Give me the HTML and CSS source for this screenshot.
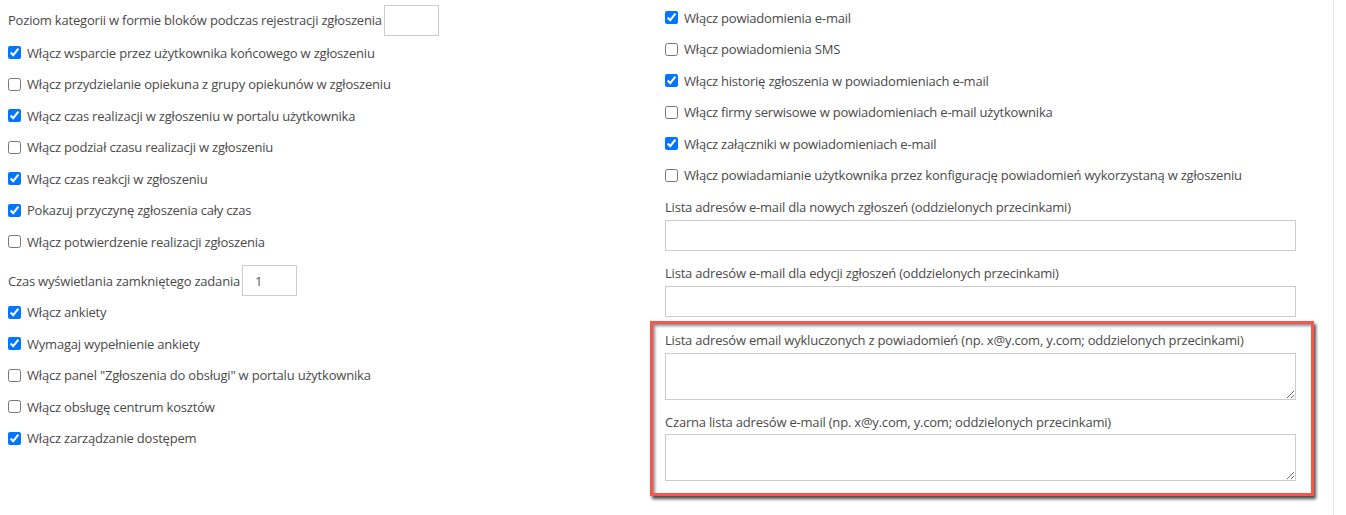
FILE: index.html
```html
<!DOCTYPE html>
<html lang="pl">
<head>
<meta charset="utf-8">
<title>Ustawienia zgłoszeń</title>
<link rel="stylesheet" href="styles.css">
</head>
<body>
<div class="page">
  <div class="col col-left">
    <div class="inline-row first">
      <span>Poziom kategorii w formie bloków podczas rejestracji zgłoszenia</span>
      <input class="small-input" type="text" value="">
    </div>
    <label class="check"><input type="checkbox" checked><span>Włącz wsparcie przez użytkownika końcowego w zgłoszeniu</span></label>
    <label class="check"><input type="checkbox"><span>Włącz przydzielanie opiekuna z grupy opiekunów w zgłoszeniu</span></label>
    <label class="check"><input type="checkbox" checked><span>Włącz czas realizacji w zgłoszeniu w portalu użytkownika</span></label>
    <label class="check"><input type="checkbox"><span>Włącz podział czasu realizacji w zgłoszeniu</span></label>
    <label class="check"><input type="checkbox" checked><span>Włącz czas reakcji w zgłoszeniu</span></label>
    <label class="check"><input type="checkbox" checked><span>Pokazuj przyczynę zgłoszenia cały czas</span></label>
    <label class="check"><input type="checkbox"><span>Włącz potwierdzenie realizacji zgłoszenia</span></label>
    <div class="inline-row second">
      <span>Czas wyświetlania zamkniętego zadania</span>
      <input class="small-input num" type="text" value="1">
    </div>
    <label class="check"><input type="checkbox" checked><span>Włącz ankiety</span></label>
    <label class="check"><input type="checkbox" checked><span>Wymagaj wypełnienie ankiety</span></label>
    <label class="check"><input type="checkbox"><span>Włącz panel "Zgłoszenia do obsługi" w portalu użytkownika</span></label>
    <label class="check"><input type="checkbox"><span>Włącz obsługę centrum kosztów</span></label>
    <label class="check"><input type="checkbox" checked><span>Włącz zarządzanie dostępem</span></label>
  </div>
  <div class="col col-right">
    <label class="check rfirst"><input type="checkbox" checked><span>Włącz powiadomienia e-mail</span></label>
    <label class="check"><input type="checkbox"><span>Włącz powiadomienia SMS</span></label>
    <label class="check"><input type="checkbox" checked><span>Włącz historię zgłoszenia w powiadomieniach e-mail</span></label>
    <label class="check"><input type="checkbox"><span>Włącz firmy serwisowe w powiadomieniach e-mail użytkownika</span></label>
    <label class="check"><input type="checkbox" checked><span>Włącz załączniki w powiadomieniach e-mail</span></label>
    <label class="check"><input type="checkbox"><span>Włącz powiadamianie użytkownika przez konfigurację powiadomień wykorzystaną w zgłoszeniu</span></label>
    <div class="field f-1">
      <div class="flabel">Lista adresów e-mail dla nowych zgłoszeń (oddzielonych przecinkami)</div>
      <input class="wide-input" type="text">
    </div>
    <div class="field f-2">
      <div class="flabel">Lista adresów e-mail dla edycji zgłoszeń (oddzielonych przecinkami)</div>
      <input class="wide-input" type="text">
    </div>
    <div class="highlight">
      <div class="field f-a">
        <div class="flabel">Lista adresów email wykluczonych z powiadomień (np. x@y.com, y.com; oddzielonych przecinkami)</div>
        <textarea class="area"></textarea>
      </div>
      <div class="field f-b">
        <div class="flabel">Czarna lista adresów e-mail (np. x@y.com, y.com; oddzielonych przecinkami)</div>
        <textarea class="area"></textarea>
      </div>
    </div>
  </div>
</div>
</body>
</html>
```

FILE: styles.css
```css
html, body {
  margin: 0;
  padding: 0;
  background: #fff;
}
body {
  font-family: "Open Sans", "Liberation Sans", sans-serif;
  font-size: 13px;
  letter-spacing: -0.2px;
  color: #4a4a4a;
  overflow: hidden;
}
.page {
  display: grid;
  grid-template-columns: 657px 676px;
  width: 1333px;
  height: 515px;
  border-right: 1px solid #e4e8ec;
}
.col-left {
  padding-left: 8px;
  display: flex;
  flex-direction: column;
}
.col-right {
  padding-left: 8px;
  padding-right: 37px;
  display: flex;
  flex-direction: column;
}
.inline-row {
  display: flex;
  align-items: center;
  height: 30px;
}
.inline-row.first {
  margin-top: 5px;
  margin-bottom: 2px;
}
.inline-row.second {
  margin-top: 8px;
  margin-bottom: 1px;
}
.inline-row span {
  margin-right: 2px;
}
.small-input {
  box-sizing: border-box;
  width: 55px;
  height: 31px;
  border: 1px solid #cccccc;
  padding: 0 12px;
  font-family: inherit;
  font-size: 13px;
  color: #555;
  background: #fff;
  outline: none;
}
.check {
  display: flex;
  align-items: center;
  height: 31.5px;
  cursor: default;
}
.check input {
  margin: 0 6px 0 0;
  width: 13px;
  height: 13px;
  flex: none;
}
.rfirst {
  margin-top: 2px;
}
.field {
  display: flex;
  flex-direction: column;
}
.flabel {
  height: 20px;
  line-height: 20px;
}
.f-1 .flabel {
  margin-top: 6px;
  margin-bottom: 3px;
}
.f-2 .flabel {
  margin-top: 12px;
  margin-bottom: 3px;
}
.wide-input {
  box-sizing: border-box;
  width: 631px;
  height: 31px;
  border: 1px solid #cccccc;
  background: #fff;
  margin: 0;
  outline: none;
}
.area {
  box-sizing: border-box;
  width: 631px;
  height: 47px;
  border: 1px solid #cccccc;
  background: #fff;
  margin: 0;
  resize: vertical;
  display: block;
}
.highlight {
  margin: 4px -18px 0 -15px;
  padding: 0 15px 12px 12px;
  border: 3px solid #f6574b;
  box-shadow: 2px 3px 3px rgba(0, 0, 0, 0.7), inset 2px 2px 3px rgba(0, 0, 0, 0.45);
}
.f-a .flabel {
  margin-top: 6px;
  margin-bottom: 3px;
}
.f-b .flabel {
  margin-top: 12px;
  margin-bottom: 2px;
}
```
